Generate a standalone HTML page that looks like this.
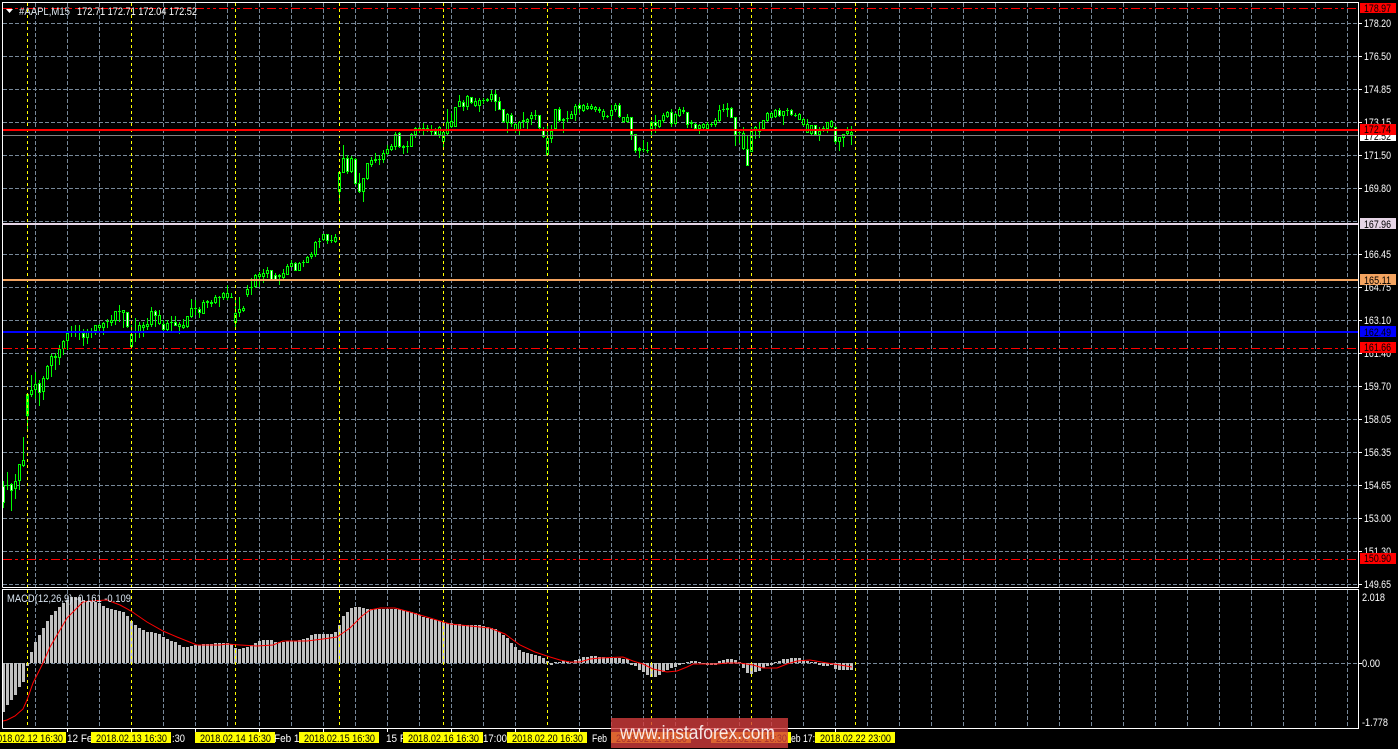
<!DOCTYPE html>
<html><head><meta charset="utf-8"><style>
html,body{margin:0;padding:0;background:#000;width:1398px;height:749px;overflow:hidden}
svg{display:block}
text{font-family:"Liberation Sans",sans-serif;font-size:11px;fill:#fff}
.k{fill:#000}
</style></head><body>
<svg xmlns="http://www.w3.org/2000/svg" width="1398" height="749" viewBox="0 0 1398 749">
<rect width="1398" height="749" fill="#000"/>
<g shape-rendering="crispEdges">
<!-- gray grid -->
<path fill="none" stroke="#778899" stroke-dasharray="4 2" d="M3 23.5H1358M3 56.5H1358M3 89.5H1358M3 122.5H1358M3 155.5H1358M3 188.5H1358M3 221.5H1358M3 254.5H1358M3 287.5H1358M3 320.5H1358M3 353.5H1358M3 386.5H1358M3 419.5H1358M3 452.5H1358M3 485.5H1358M3 518.5H1358M3 551.5H1358M3 584.5H1358M3 663.5H1358"/>
<path fill="none" stroke="#778899" stroke-dasharray="4 2" d="M35.5 3V587M67.5 3V587M99.5 3V587M163.5 3V587M195.5 3V587M227.5 3V587M259.5 3V587M291.5 3V587M323.5 3V587M355.5 3V587M387.5 3V587M419.5 3V587M451.5 3V587M483.5 3V587M515.5 3V587M579.5 3V587M611.5 3V587M643.5 3V587M675.5 3V587M707.5 3V587M739.5 3V587M771.5 3V587M803.5 3V587M835.5 3V587M867.5 3V587M899.5 3V587M931.5 3V587M963.5 3V587M995.5 3V587M1027.5 3V587M1059.5 3V587M1091.5 3V587M1123.5 3V587M1155.5 3V587M1187.5 3V587M1219.5 3V587M1251.5 3V587M1283.5 3V587M1315.5 3V587M1347.5 3V587"/>
<path fill="none" stroke="#778899" stroke-dasharray="4 2" d="M35.5 590V728M67.5 590V728M99.5 590V728M163.5 590V728M195.5 590V728M227.5 590V728M259.5 590V728M291.5 590V728M323.5 590V728M355.5 590V728M387.5 590V728M419.5 590V728M451.5 590V728M483.5 590V728M515.5 590V728M579.5 590V728M611.5 590V728M643.5 590V728M675.5 590V728M707.5 590V728M739.5 590V728M771.5 590V728M803.5 590V728M835.5 590V728M867.5 590V728M899.5 590V728M931.5 590V728M963.5 590V728M995.5 590V728M1027.5 590V728M1059.5 590V728M1091.5 590V728M1123.5 590V728M1155.5 590V728M1187.5 590V728M1219.5 590V728M1251.5 590V728M1283.5 590V728M1315.5 590V728M1347.5 590V728"/>
<!-- MACD bars -->
<path fill="none" stroke="#c0c0c0" stroke-width="3" d="M3.5 663V712M7.5 663V705M11.5 663V700M15.5 663V695M19.5 663V687M23.5 663V682M27.5 663V666M31.5 652V663M35.5 642V663M39.5 635V663M43.5 628V663M47.5 621V663M51.5 615V663M55.5 611V663M59.5 607V663M63.5 603V663M67.5 600V663M71.5 597V663M75.5 597V663M79.5 597V663M83.5 600V663M87.5 601V663M91.5 601V663M95.5 602V663M99.5 603V663M103.5 606V663M107.5 608V663M111.5 609V663M115.5 610V663M119.5 611V663M123.5 612V663M127.5 616V663M131.5 621V663M135.5 625V663M139.5 628V663M143.5 630V663M147.5 632V663M151.5 632V663M155.5 633V663M159.5 634V663M163.5 637V663M167.5 639V663M171.5 641V663M175.5 642V663M179.5 645V663M183.5 647V663M187.5 647V663M191.5 646V663M195.5 645V663M199.5 645V663M203.5 644V663M207.5 644V663M211.5 644V663M215.5 643V663M219.5 643V663M223.5 643V663M227.5 643V663M231.5 644V663M235.5 648V663M239.5 649V663M243.5 648V663M247.5 647V663M251.5 645V663M255.5 643V663M259.5 641V663M263.5 640V663M267.5 640V663M271.5 640V663M275.5 642V663M279.5 642V663M283.5 642V663M287.5 641V663M291.5 641V663M295.5 641V663M299.5 640V663M303.5 639V663M307.5 638V663M311.5 635V663M315.5 634V663M319.5 634V663M323.5 634V663M327.5 634V663M331.5 634V663M335.5 632V663M339.5 625V663M343.5 616V663M347.5 612V663M351.5 608V663M355.5 607V663M359.5 607V663M363.5 608V663M367.5 609V663M371.5 609V663M375.5 609V663M379.5 609V663M383.5 609V663M387.5 609V663M391.5 609V663M395.5 609V663M399.5 609V663M403.5 610V663M407.5 611V663M411.5 612V663M415.5 613V663M419.5 615V663M423.5 617V663M427.5 618V663M431.5 619V663M435.5 620V663M439.5 621V663M443.5 622V663M447.5 623V663M451.5 623V663M455.5 624V663M459.5 624V663M463.5 625V663M467.5 625V663M471.5 625V663M475.5 625V663M479.5 625V663M483.5 626V663M487.5 627V663M491.5 628V663M495.5 629V663M499.5 632V663M503.5 635V663M507.5 638V663M511.5 643V663M515.5 647V663M519.5 650V663M523.5 652V663M527.5 653V663M531.5 654V663M535.5 655V663M539.5 656V663M543.5 658V663M547.5 661V663M551.5 663V665M555.5 662V663M559.5 662V663M563.5 661V663M567.5 661V663M571.5 662V663M575.5 660V663M579.5 659V663M583.5 657V663M587.5 657V663M591.5 656V663M595.5 656V663M599.5 657V663M603.5 657V663M607.5 658V663M611.5 658V663M615.5 658V663M619.5 658V663M623.5 659V663M627.5 659V663M631.5 663V665M635.5 663V666M639.5 663V670M643.5 663V672M647.5 663V675M651.5 663V677M655.5 663V677M659.5 663V675M663.5 663V672M667.5 663V670M671.5 663V668M675.5 663V667M679.5 663V665M683.5 663V664M687.5 662V663M691.5 661V663M695.5 661V663M699.5 662V663M703.5 663V664M707.5 663V665M711.5 663V665M715.5 663V665M719.5 661V663M723.5 660V663M727.5 659V663M731.5 659V663M735.5 660V663M739.5 662V663M743.5 663V668M747.5 663V673M751.5 663V674M755.5 663V672M759.5 663V671M763.5 663V668M767.5 663V666M771.5 663V665M775.5 662V663M779.5 661V663M783.5 659V663M787.5 659V663M791.5 658V663M795.5 658V663M799.5 658V663M803.5 660V663M807.5 661V663M811.5 662V663M815.5 662V663M819.5 663V665M823.5 663V666M827.5 663V666M831.5 663V665M835.5 663V669M839.5 663V670M843.5 663V670M847.5 663V670M851.5 663V670"/>
<!-- candle wicks -->
<path fill="none" stroke="#00ff00" d="M3.5 481V508M7.5 472V490M11.5 483V511M15.5 474V499M19.5 464V490M23.5 437V467M27.5 393V429M31.5 375V397M35.5 372V399M39.5 380V406M43.5 376V400M47.5 365V380M51.5 354V377M55.5 353V370M59.5 345V365M63.5 340V355M67.5 330V350M71.5 326V337M75.5 325V337M79.5 325V340M83.5 329V346M87.5 329V344M91.5 328V338M95.5 325V335M99.5 324V332M103.5 322V335M107.5 319V328M111.5 315V326M115.5 311V325M119.5 305V322M123.5 310V328M127.5 312V328M131.5 325V348M135.5 318V342M139.5 322V338M143.5 322V337M147.5 318V330M151.5 307V327M155.5 310V327M159.5 310V325M163.5 320V331M167.5 320V331M171.5 316V331M175.5 316V326M179.5 322V334M183.5 319V329M187.5 316V328M191.5 299V318M195.5 300V315M199.5 307V318M203.5 300V314M207.5 300V308M211.5 300V307M215.5 295V304M219.5 296V307M223.5 292V300M227.5 285V300M231.5 293V298M235.5 300V330M239.5 297V317M243.5 306V312M247.5 285V297M251.5 278V295M255.5 274V288M259.5 272V287M263.5 269V283M267.5 267V278M271.5 270V280M275.5 273V280M279.5 274V285M283.5 269V279M287.5 264V275M291.5 260V267M295.5 262V271M299.5 262V271M303.5 260V267M307.5 256V263M311.5 252V259M315.5 241V257M319.5 238V248M323.5 234V241M327.5 234V244M331.5 235V243M335.5 234V243M339.5 172V203M343.5 145V173M347.5 155V174M351.5 156V173M355.5 158V185M359.5 173V193M363.5 178V202M367.5 163V180M371.5 157V167M375.5 153V163M379.5 155V165M383.5 150V163M387.5 145V155M391.5 144V151M395.5 132V150M399.5 132V148M403.5 145V154M407.5 141V153M411.5 133V147M415.5 127V138M419.5 127V133M423.5 123V135M427.5 125V132M431.5 125V135M435.5 128V135M439.5 126V138M443.5 132V150M447.5 109V135M451.5 113V128M455.5 107V127M459.5 95V107M463.5 100V111M467.5 95V110M471.5 97V104M475.5 98V107M479.5 98V112M483.5 98V104M487.5 98V102M491.5 90V102M495.5 90V111M499.5 97V110M503.5 109V123M507.5 113V133M511.5 113V127M515.5 123V133M519.5 121V135M523.5 112V128M527.5 118V129M531.5 112V125M535.5 110V120M539.5 115V129M543.5 127V138M547.5 123V155M551.5 125V143M555.5 109V130M559.5 107V122M563.5 118V133M567.5 111V122M571.5 111V119M575.5 104V121M579.5 103V113M583.5 104V112M587.5 103V110M591.5 104V110M595.5 106V112M599.5 107V113M603.5 109V120M607.5 115V118M611.5 105V120M615.5 103V112M619.5 103V118M623.5 117V123M627.5 114V123M631.5 117V140M635.5 134V153M639.5 147V158M643.5 140V152M647.5 142V153M651.5 121V138M655.5 115V133M659.5 120V128M663.5 113V123M667.5 111V118M671.5 109V127M675.5 113V125M679.5 107V117M683.5 107V114M687.5 112V128M691.5 120V128M695.5 123V130M699.5 124V134M703.5 123V130M707.5 122V130M711.5 122V127M715.5 118V127M719.5 105V122M723.5 104V112M727.5 103V117M731.5 107V118M735.5 117V146M739.5 132V143M743.5 127V150M747.5 135V166M751.5 127V152M755.5 126V139M759.5 122V138M763.5 120V130M767.5 112V122M771.5 112V118M775.5 109V118M779.5 108V117M783.5 111V125M787.5 108V116M791.5 109V116M795.5 113V117M799.5 113V120M803.5 118V126M807.5 119V133M811.5 125V136M815.5 125V136M819.5 127V141M823.5 126V132M827.5 122V133M831.5 120V128M835.5 126V144M839.5 137V151M843.5 134V147M847.5 127V135M851.5 126V145"/>
<!-- candle bodies -->
<path fill="none" stroke="#00ff00" stroke-width="3" d="M3.5 486V503M7.5 485V486M11.5 484V491M15.5 481V489M19.5 464V481M23.5 460V466M27.5 394V416M31.5 390V395M35.5 384V390M39.5 383V393M43.5 378V392M47.5 366V379M51.5 356V366M55.5 356V358M59.5 349V358M63.5 341V349M67.5 333V341M71.5 331V332M75.5 331V332M79.5 331V332M83.5 333V338M87.5 331V338M91.5 331V332M95.5 325V331M99.5 325V328M103.5 323V328M107.5 321V322M111.5 320V323M115.5 311V321M119.5 311V312M123.5 310V313M127.5 312V327M131.5 334V347M135.5 331V332M139.5 325V332M143.5 325V328M147.5 324V327M151.5 311V325M155.5 311V316M159.5 315V324M163.5 324V330M167.5 323V330M171.5 322V323M175.5 322V326M179.5 324V327M183.5 325V328M187.5 316V327M191.5 308V317M195.5 308V309M199.5 309V313M203.5 302V314M207.5 301V303M211.5 302V304M215.5 297V303M219.5 297V298M223.5 293V298M227.5 293V298M231.5 297V298M235.5 313V323M239.5 309V313M243.5 308V311M247.5 289V295M251.5 287V288M255.5 275V287M259.5 274V277M263.5 273V277M267.5 270V274M271.5 270V280M275.5 275V280M279.5 275V277M283.5 273V278M287.5 266V275M291.5 263V267M295.5 263V271M299.5 263V271M303.5 262V263M307.5 257V263M311.5 254V257M315.5 242V255M319.5 241V242M323.5 234V240M327.5 234V241M331.5 240V241M335.5 237V242M339.5 172V192M343.5 158V173M347.5 158V172M351.5 158V172M355.5 159V184M359.5 183V192M363.5 178V192M367.5 163V179M371.5 160V165M375.5 159V161M379.5 159V160M383.5 153V160M387.5 149V154M391.5 146V150M395.5 134V147M399.5 133V147M403.5 146V148M407.5 146V147M411.5 134V147M415.5 128V135M419.5 128V129M423.5 128V129M427.5 128V129M431.5 129V132M435.5 131V135M439.5 127V135M443.5 132V142M447.5 122V134M451.5 121V127M455.5 107V127M459.5 101V107M463.5 102V107M467.5 96V107M471.5 97V103M475.5 101V106M479.5 100V106M483.5 100V101M487.5 99V101M491.5 94V100M495.5 94V102M499.5 101V110M503.5 109V122M507.5 114V123M511.5 115V124M515.5 124V131M519.5 122V130M523.5 120V122M527.5 119V122M531.5 115V119M535.5 115V116M539.5 115V128M543.5 129V137M547.5 138V155M551.5 131V139M555.5 109V129M559.5 109V121M563.5 119V121M567.5 118V119M571.5 114V119M575.5 106V115M579.5 105V109M583.5 105V111M587.5 106V109M591.5 106V109M595.5 107V110M599.5 109V111M603.5 111V117M607.5 116V117M611.5 110V116M615.5 105V110M619.5 105V117M623.5 117V122M627.5 117V122M631.5 117V135M635.5 134V151M639.5 148V151M643.5 149V150M647.5 150V151M651.5 122V129M655.5 122V126M659.5 120V127M663.5 115V121M667.5 112V117M671.5 112V124M675.5 114V124M679.5 109V116M683.5 110V112M687.5 112V125M691.5 122V124M695.5 124V129M699.5 125V129M703.5 124V128M707.5 124V129M711.5 124V125M715.5 120V125M719.5 110V121M723.5 109V110M727.5 108V110M731.5 108V118M735.5 117V135M739.5 132V133M743.5 133V149M747.5 149V166M751.5 131V152M755.5 127V130M759.5 131V132M763.5 120V129M767.5 113V121M771.5 113V118M775.5 110V117M779.5 110V116M783.5 111V116M787.5 110V111M791.5 110V115M795.5 115V116M799.5 114V120M803.5 119V125M807.5 124V133M811.5 125V134M815.5 125V135M819.5 131V135M823.5 128V129M827.5 122V129M831.5 121V127M835.5 127V142M839.5 137V142M843.5 134V138M847.5 131V134M851.5 132V135"/>
<!-- white interiors -->
<path fill="none" stroke="#ffffff" d="M3.5 487V502M11.5 485V490M39.5 384V392M83.5 334V337M127.5 313V326M155.5 312V315M163.5 325V329M175.5 323V325M199.5 310V312M271.5 271V279M275.5 276V279M295.5 264V270M327.5 235V240M347.5 159V171M355.5 160V183M359.5 184V191M399.5 134V146M435.5 132V134M463.5 103V106M471.5 98V102M495.5 95V101M499.5 102V109M503.5 110V121M511.5 116V123M539.5 116V127M543.5 130V136M559.5 110V120M579.5 106V108M619.5 106V116M631.5 118V134M635.5 135V150M655.5 123V125M671.5 113V123M687.5 113V124M695.5 125V128M731.5 109V117M735.5 118V134M747.5 150V165M779.5 111V115M791.5 111V114M815.5 126V134M835.5 128V141"/>
<!-- black interiors -->
<path fill="none" stroke="#000000" d="M15.5 482V488M19.5 465V480M23.5 461V465M31.5 391V394M35.5 385V389M43.5 379V391M47.5 367V378M51.5 357V365M59.5 350V357M63.5 342V348M67.5 334V340M87.5 332V337M95.5 326V330M99.5 326V327M103.5 324V327M111.5 321V322M115.5 312V320M123.5 311V312M131.5 335V346M139.5 326V331M143.5 326V327M147.5 325V326M151.5 312V324M159.5 316V323M167.5 324V329M179.5 325V326M183.5 326V327M187.5 317V326M191.5 309V316M203.5 303V313M215.5 298V302M223.5 294V297M227.5 294V297M235.5 314V322M239.5 310V312M243.5 309V310M247.5 290V294M255.5 276V286M259.5 275V276M263.5 274V276M267.5 271V273M283.5 274V277M287.5 267V274M291.5 264V266M299.5 264V270M307.5 258V262M311.5 255V256M315.5 243V254M323.5 235V239M335.5 238V241M339.5 173V191M343.5 159V172M351.5 159V171M363.5 179V191M367.5 164V178M371.5 161V164M383.5 154V159M387.5 150V153M391.5 147V149M395.5 135V146M411.5 135V146M415.5 129V134M431.5 130V131M439.5 128V134M443.5 133V141M447.5 123V133M451.5 122V126M455.5 108V126M459.5 102V106M467.5 97V106M475.5 102V105M479.5 101V105M491.5 95V99M507.5 115V122M515.5 125V130M519.5 123V129M527.5 120V121M531.5 116V118M547.5 139V154M551.5 132V138M555.5 110V128M571.5 115V118M575.5 107V114M583.5 106V110M587.5 107V108M591.5 107V108M595.5 108V109M603.5 112V116M611.5 111V115M615.5 106V109M623.5 118V121M627.5 118V121M651.5 123V128M659.5 121V126M663.5 116V120M667.5 113V116M675.5 115V123M679.5 110V115M699.5 126V128M703.5 125V127M707.5 125V128M715.5 121V124M719.5 111V120M743.5 134V148M751.5 132V151M755.5 128V129M763.5 121V128M767.5 114V120M771.5 114V117M775.5 111V116M783.5 112V115M799.5 115V119M803.5 120V124M807.5 125V132M811.5 126V133M819.5 132V134M827.5 123V128M831.5 122V126M839.5 138V141M843.5 135V137M847.5 132V133M851.5 133V134"/>
<!-- yellow period lines -->
<path fill="none" stroke="#ffff00" stroke-dasharray="3 3" d="M27.5 3V587M131.5 3V587M235.5 3V587M339.5 3V587M443.5 3V587M547.5 3V587M651.5 3V587M751.5 3V587M855.5 3V587M27.5 590V728M131.5 590V728M235.5 590V728M339.5 590V728M443.5 590V728M547.5 590V728M651.5 590V728M751.5 590V728M855.5 590V728"/>
<!-- horizontal levels -->
<path fill="none" stroke="#ff0000" stroke-dasharray="9 3 3 3 3 3" d="M3 8.5H1356M3 348.5H1356M3 559.5H1356"/>
<rect x="3" y="129" width="1355" height="2" fill="#ff0000"/>
<rect x="3" y="135" width="1355" height="1" fill="#808080"/>
<rect x="3" y="223" width="1355" height="2" fill="#e6d5e6"/>
<rect x="3" y="279" width="1355" height="2" fill="#f4a460"/>
<rect x="3" y="331" width="1355" height="2" fill="#0000ff"/>
<!-- frames -->
<path fill="none" stroke="#ffffff" d="M2.5 587.5V2.5H1358.5V587.5H2.5M2.5 728.5V589.5H1358.5V728.5H2.5"/>
<!-- axis ticks -->
<path fill="none" stroke="#ffffff" d="M1359 23.5h3M1359 56.5h3M1359 89.5h3M1359 122.5h3M1359 155.5h3M1359 188.5h3M1359 254.5h3M1359 287.5h3M1359 320.5h3M1359 353.5h3M1359 386.5h3M1359 419.5h3M1359 452.5h3M1359 485.5h3M1359 518.5h3M1359 551.5h3M1359 584.5h3M1359 663.5h3M67.5 729v3M131.5 729v3M195.5 729v3M259.5 729v3M323.5 729v3M387.5 729v3M451.5 729v3M515.5 729v3M579.5 729v3M643.5 729v3M707.5 729v3M771.5 729v3M835.5 729v3"/>
</g>
<!-- MACD signal -->
<polyline fill="none" stroke="#ff0000" points="3,721 7,720 15,716 23,709 27,700 33,683 43,663 50,647 60,630 67,618 77,608 83,602 90,601 107,600 120,605 131,611 147,622 163,631 177,637 197,645 220,645 227,644 240,645 257,646 273,645 283,641 307,641 323,639 337,637 350,628 362,616 370,610 380,608 395,608 410,612 430,618 450,624 470,626 490,628 505,634 520,645 535,652 550,657 560,660 570,662 580,662 590,659 600,658 623,657 633,661 643,664 653,669 667,672 677,671 687,667 693,664 717,664 727,663 740,663 753,665 763,668 777,668 787,664 797,661 810,660 827,663 840,665 852,667"/>
<!-- header -->
<polygon points="6,9 13,9 9.5,13" fill="#fff"/>
<text x="19" y="15" textLength="51" lengthAdjust="spacingAndGlyphs" style="fill:#dfe8f0">#AAPL,M15</text>
<text x="77" y="15" textLength="120" lengthAdjust="spacingAndGlyphs">172.71 172.71 172.04 172.52</text>
<text x="7" y="602" textLength="124" lengthAdjust="spacingAndGlyphs" style="fill:#d8e4f0">MACD(12,26,9) -0.161 -0.109</text>
<!-- price labels -->
<g>
<text x="1364" y="27" textLength="27" lengthAdjust="spacingAndGlyphs">178.20</text>
<text x="1364" y="60" textLength="27" lengthAdjust="spacingAndGlyphs">176.50</text>
<text x="1364" y="93" textLength="27" lengthAdjust="spacingAndGlyphs">174.85</text>
<text x="1364" y="126" textLength="27" lengthAdjust="spacingAndGlyphs">173.15</text>
<text x="1364" y="159" textLength="27" lengthAdjust="spacingAndGlyphs">171.50</text>
<text x="1364" y="192" textLength="27" lengthAdjust="spacingAndGlyphs">169.80</text>
<text x="1364" y="258" textLength="27" lengthAdjust="spacingAndGlyphs">166.45</text>
<text x="1364" y="291" textLength="27" lengthAdjust="spacingAndGlyphs">164.75</text>
<text x="1364" y="324" textLength="27" lengthAdjust="spacingAndGlyphs">163.10</text>
<text x="1364" y="357" textLength="27" lengthAdjust="spacingAndGlyphs">161.40</text>
<text x="1364" y="390" textLength="27" lengthAdjust="spacingAndGlyphs">159.70</text>
<text x="1364" y="423" textLength="27" lengthAdjust="spacingAndGlyphs">158.05</text>
<text x="1364" y="456" textLength="27" lengthAdjust="spacingAndGlyphs">156.35</text>
<text x="1364" y="489" textLength="27" lengthAdjust="spacingAndGlyphs">154.65</text>
<text x="1364" y="522" textLength="27" lengthAdjust="spacingAndGlyphs">153.00</text>
<text x="1364" y="555" textLength="27" lengthAdjust="spacingAndGlyphs">151.30</text>
<text x="1364" y="588" textLength="27" lengthAdjust="spacingAndGlyphs">149.65</text>
<text x="1362" y="601" textLength="23" lengthAdjust="spacingAndGlyphs">2.018</text>
<text x="1362" y="667" textLength="18" lengthAdjust="spacingAndGlyphs">0.00</text>
<text x="1362" y="726" textLength="26" lengthAdjust="spacingAndGlyphs">-1.778</text>
</g>
<!-- level tags -->
<g shape-rendering="crispEdges">
<rect x="1360" y="3" width="36" height="10" fill="#ff0000"/>
<rect x="1360" y="130" width="36" height="11" fill="#ffffff"/>
<rect x="1360" y="124" width="36" height="11" fill="#ff0000"/>
<rect x="1360" y="218" width="36" height="11" fill="#e6d5e6"/>
<rect x="1360" y="274" width="36" height="11" fill="#f4a460"/>
<rect x="1360" y="326" width="36" height="11" fill="#0000ff"/>
<rect x="1360" y="342" width="36" height="11" fill="#ff0000"/>
<rect x="1360" y="553" width="36" height="11" fill="#ff0000"/>
</g>
<clipPath id="c1"><rect x="1360" y="135" width="36" height="6"/></clipPath>
<text class="k" x="1364" y="12" textLength="27" lengthAdjust="spacingAndGlyphs">178.97</text>
<text class="k" x="1364" y="140" textLength="27" lengthAdjust="spacingAndGlyphs" clip-path="url(#c1)">172.52</text>
<text class="k" x="1364" y="133" textLength="27" lengthAdjust="spacingAndGlyphs">172.74</text>
<text class="k" x="1364" y="228" textLength="27" lengthAdjust="spacingAndGlyphs">167.96</text>
<text class="k" x="1364" y="284" textLength="27" lengthAdjust="spacingAndGlyphs">165.11</text>
<text class="k" x="1364" y="336" textLength="27" lengthAdjust="spacingAndGlyphs">162.49</text>
<text class="k" x="1364" y="351" textLength="27" lengthAdjust="spacingAndGlyphs">161.66</text>
<text class="k" x="1364" y="562" textLength="27" lengthAdjust="spacingAndGlyphs">150.90</text>
<!-- time axis -->
<text x="67" y="742" textLength="31" lengthAdjust="spacingAndGlyphs">12 Feb</text>
<text x="172" y="742" textLength="13" lengthAdjust="spacingAndGlyphs">:30</text>
<text x="274" y="742" textLength="31" lengthAdjust="spacingAndGlyphs">Feb 18</text>
<text x="386" y="742" textLength="31" lengthAdjust="spacingAndGlyphs">15 Feb</text>
<text x="483" y="742" textLength="24" lengthAdjust="spacingAndGlyphs">17:00</text>
<text x="592" y="742" textLength="15" lengthAdjust="spacingAndGlyphs">Feb</text>
<text x="791" y="742" textLength="24" lengthAdjust="spacingAndGlyphs">eb 17:</text>
<g shape-rendering="crispEdges" fill="#ffff00">
<rect x="0" y="732" width="66" height="11"/>
<rect x="91" y="732" width="80" height="11"/>
<rect x="195" y="732" width="80" height="11"/>
<rect x="299" y="732" width="80" height="11"/>
<rect x="403" y="732" width="80" height="11"/>
<rect x="507" y="732" width="80" height="11"/>
<rect x="611" y="732" width="80" height="11"/>
<rect x="711" y="732" width="80" height="11"/>
<rect x="815" y="732" width="80" height="11"/>
</g>
<text class="k" x="-8" y="742" textLength="71" lengthAdjust="spacingAndGlyphs">2018.02.12 16:30</text>
<text class="k" x="96" y="742" textLength="71" lengthAdjust="spacingAndGlyphs">2018.02.13 16:30</text>
<text class="k" x="200" y="742" textLength="71" lengthAdjust="spacingAndGlyphs">2018.02.14 16:30</text>
<text class="k" x="304" y="742" textLength="71" lengthAdjust="spacingAndGlyphs">2018.02.15 16:30</text>
<text class="k" x="408" y="742" textLength="71" lengthAdjust="spacingAndGlyphs">2018.02.16 16:30</text>
<text class="k" x="512" y="742" textLength="71" lengthAdjust="spacingAndGlyphs">2018.02.20 16:30</text>
<text class="k" x="616" y="742" textLength="71" lengthAdjust="spacingAndGlyphs">2018.02.21 16:30</text>
<text class="k" x="716" y="742" textLength="71" lengthAdjust="spacingAndGlyphs">2018.02.22 16:30</text>
<text class="k" x="820" y="742" textLength="71" lengthAdjust="spacingAndGlyphs">2018.02.22 23:00</text>
<!-- watermark -->
<rect x="611" y="718" width="177" height="30" fill="#d23c3c" fill-opacity="0.8" shape-rendering="crispEdges"/>
<text x="620" y="739" textLength="155" lengthAdjust="spacingAndGlyphs" style="font-size:19px;fill:#fff;fill-opacity:.88">www.instaforex.com</text>
</svg>
</body></html>
